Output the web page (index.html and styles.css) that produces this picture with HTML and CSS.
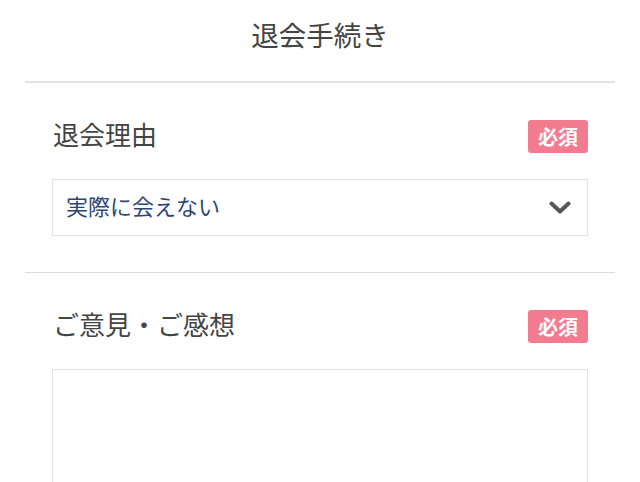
FILE: index.html
```html
<!DOCTYPE html>
<html lang="ja">
<head>
<meta charset="utf-8">
<title>退会手続き</title>
<link rel="stylesheet" href="styles.css">
</head>
<body>
<div class="page">
  <header class="header">
    <h1 class="title">退会手続き</h1>
  </header>
  <section class="section section-first">
    <div class="field-head">
      <span class="label">退会理由</span>
      <span class="badge">必須</span>
    </div>
    <div class="select">
      <span class="select-text">実際に会えない</span>
      <svg class="chevron" width="22" height="14" viewBox="0 0 22 14"><polyline points="2.5,2.5 11,10.5 19.5,2.5" fill="none" stroke="#555" stroke-width="4" stroke-linecap="round" stroke-linejoin="round"/></svg>
    </div>
  </section>
  <section class="section">
    <div class="field-head">
      <span class="label">ご意見・ご感想</span>
      <span class="badge">必須</span>
    </div>
    <div class="textarea"></div>
  </section>
</div>
</body>
</html>
```
FILE: styles.css
```css
html, body {
  margin: 0;
  padding: 0;
  background: #fff;
}
body {
  font-family: "Noto Sans CJK JP", "Noto Sans", sans-serif;
  color: #444;
}
.page {
  padding: 0 25px;
}
.header {
  height: 81px;
  border-bottom: 2px solid #e2e2e2;
  display: flex;
  align-items: flex-start;
  justify-content: center;
}
.title {
  margin: 16px 0 0;
  font-size: 27.5px;
  font-weight: 400;
  line-height: 36px;
  color: #444;
}
.section {
  padding: 37px 27px 36px 28px;
  border-bottom: 1px solid #dcdcdc;
}
.field-head {
  display: flex;
  justify-content: space-between;
  align-items: center;
  height: 33px;
  margin-bottom: 26px;
}
.label {
  font-size: 26px;
  line-height: 33px;
  padding-bottom: 6px;
  color: #444;
}
.badge {
  width: 60px;
  height: 33px;
  background: #f27b8f;
  border-radius: 3px;
  color: #fff;
  font-weight: 700;
  font-size: 20px;
  line-height: 33px;
  text-align: center;
}
.select {
  height: 55px;
  margin-left: -1px;
  border: 1px solid #e2e2e2;
  display: flex;
  align-items: center;
  justify-content: space-between;
  padding: 0 16px 0 13px;
}
.select-text {
  font-size: 22px;
  padding-bottom: 5px;
  color: #2c4676;
}
.chevron {
  display: block;
}
.textarea {
  height: 150px;
  margin-left: -1px;
  border: 1px solid #e2e2e2;
}
```
